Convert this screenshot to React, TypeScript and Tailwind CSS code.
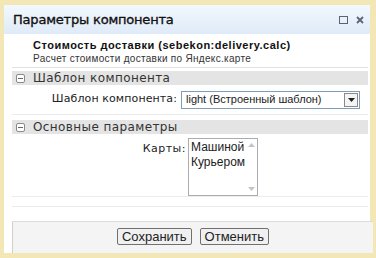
import React from 'react'

const verdana = { fontFamily: '"DejaVu Sans", Verdana, sans-serif' }
const arial = { fontFamily: '"Liberation Sans", Arial, sans-serif' }

function Minus() {
  return (
    <div className="w-[9px] h-[9px] rounded-[2px] border border-[#8a8a8a] bg-white flex items-center justify-center">
      <div className="w-[5px] h-px bg-[#666]" />
    </div>
  )
}

function Section({ title }: { title: string }) {
  return (
    <div className="h-[14px] bg-[#e4e4e4] flex items-center pl-[4px] gap-[8px]">
      <Minus />
      <span className="text-[12px] leading-none text-[#333] tracking-[0.4px]" style={verdana}>{title}</span>
    </div>
  )
}

export default function App() {
  return (
    <div className="w-[376px] h-[258px] bg-[#f3e7b6] pl-[4px] pr-[6px] pt-[5px] pb-[5px]">
      <div className="h-full bg-white flex flex-col">
        {/* Title bar */}
        <div className="h-[29px] shrink-0 bg-gradient-to-b from-[#f2f8fe] to-[#dfebf8] flex items-center justify-between pl-[9px] pr-[6px]">
          <span className="text-[13px] text-[#111] tracking-[-0.2px] [-webkit-text-stroke:0.35px_#111]" style={verdana}>Параметры компонента</span>
          <div className="flex items-center gap-[8px]">
            <div className="w-[9px] h-[8px] border-[1.5px] border-[#5d6373]" />
            <svg width="8" height="8" viewBox="0 0 8 8">
              <path d="M1 1L7 7M7 1L1 7" stroke="#5d6373" strokeWidth="1.8" />
            </svg>
          </div>
        </div>

        {/* Content */}
        <div className="flex-1 flex flex-col pl-[8px] pr-[2px]">
          <div className="pl-[21px] pt-[4px] pb-[2px] border-b border-[#e2e2e2]" style={arial}>
            <div className="text-[11px] font-bold text-[#111] leading-[14px] tracking-[0.5px]">Стоимость доставки (sebekon:delivery.calc)</div>
            <div className="text-[10px] text-[#333] leading-[13px] tracking-[0.3px]">Расчет стоимости доставки по Яндекс.карте</div>
          </div>

          <div className="mt-[3px]">
            <Section title="Шаблон компонента" />
          </div>
          <div className="flex items-center h-[30px] border-b border-[#ececec]">
            <div className="w-[169px] text-right pr-[4px] text-[11px] text-[#222] tracking-[0.1px]" style={verdana}>Шаблон компонента:</div>
            <div className="w-[179px] h-[18px] border border-[#7f9db9] flex items-center justify-between pl-[4px] pr-[1px]" style={arial}>
              <span className="text-[11px] text-[#222]">light (Встроенный шаблон)</span>
              <div className="w-[14px] h-[14px] border border-[#8a8a8a] bg-[#f4f4f4] flex items-center justify-center">
                <svg width="7" height="4" viewBox="0 0 7 4"><path d="M0 0H7L3.5 4Z" fill="#222" /></svg>
              </div>
            </div>
          </div>

          <div className="mt-[5px]">
            <Section title="Основные параметры" />
          </div>
          <div className="flex items-start pt-[4px] border-b border-[#ececec]">
            <div className="w-[176px] text-right pr-[2px] text-[11px] text-[#222] tracking-[0.5px] pt-[3px]" style={verdana}>Карты:</div>
            <div className="w-[70px] h-[58px] border border-[#a9acb2] flex" style={arial}>
              <div className="flex-1 pl-[2px] pt-[1px] text-[12px] leading-[15px] text-[#222]">
                <div>Машиной</div>
                <div>Курьером</div>
              </div>
              <div className="w-[15px] flex flex-col justify-between items-center py-[4px]">
                <svg width="7" height="4" viewBox="0 0 7 4"><path d="M0 4H7L3.5 0Z" fill="#c4c4c4" /></svg>
                <svg width="7" height="4" viewBox="0 0 7 4"><path d="M0 0H7L3.5 4Z" fill="#c4c4c4" /></svg>
              </div>
            </div>
          </div>
          <div className="h-[10px] border-b border-[#ececec]" />
        </div>

        {/* Footer */}
        <div className="h-[32px] shrink-0 ml-[8px] mr-[-3px] pb-[3px] bg-[#f4f4f4] border-t border-[#dcdcdc] border-l border-l-[#cfcfcf] flex items-center justify-center gap-[8px]" style={arial}>
          <button className="h-[17px] px-[4px] text-[13px] leading-none text-[#222] bg-[#f0f0f0] border border-[#707070] rounded-[2px]">Сохранить</button>
          <button className="h-[17px] px-[4px] text-[13px] leading-none text-[#222] bg-[#f0f0f0] border border-[#707070] rounded-[2px]">Отменить</button>
        </div>
      </div>
    </div>
  )
}
